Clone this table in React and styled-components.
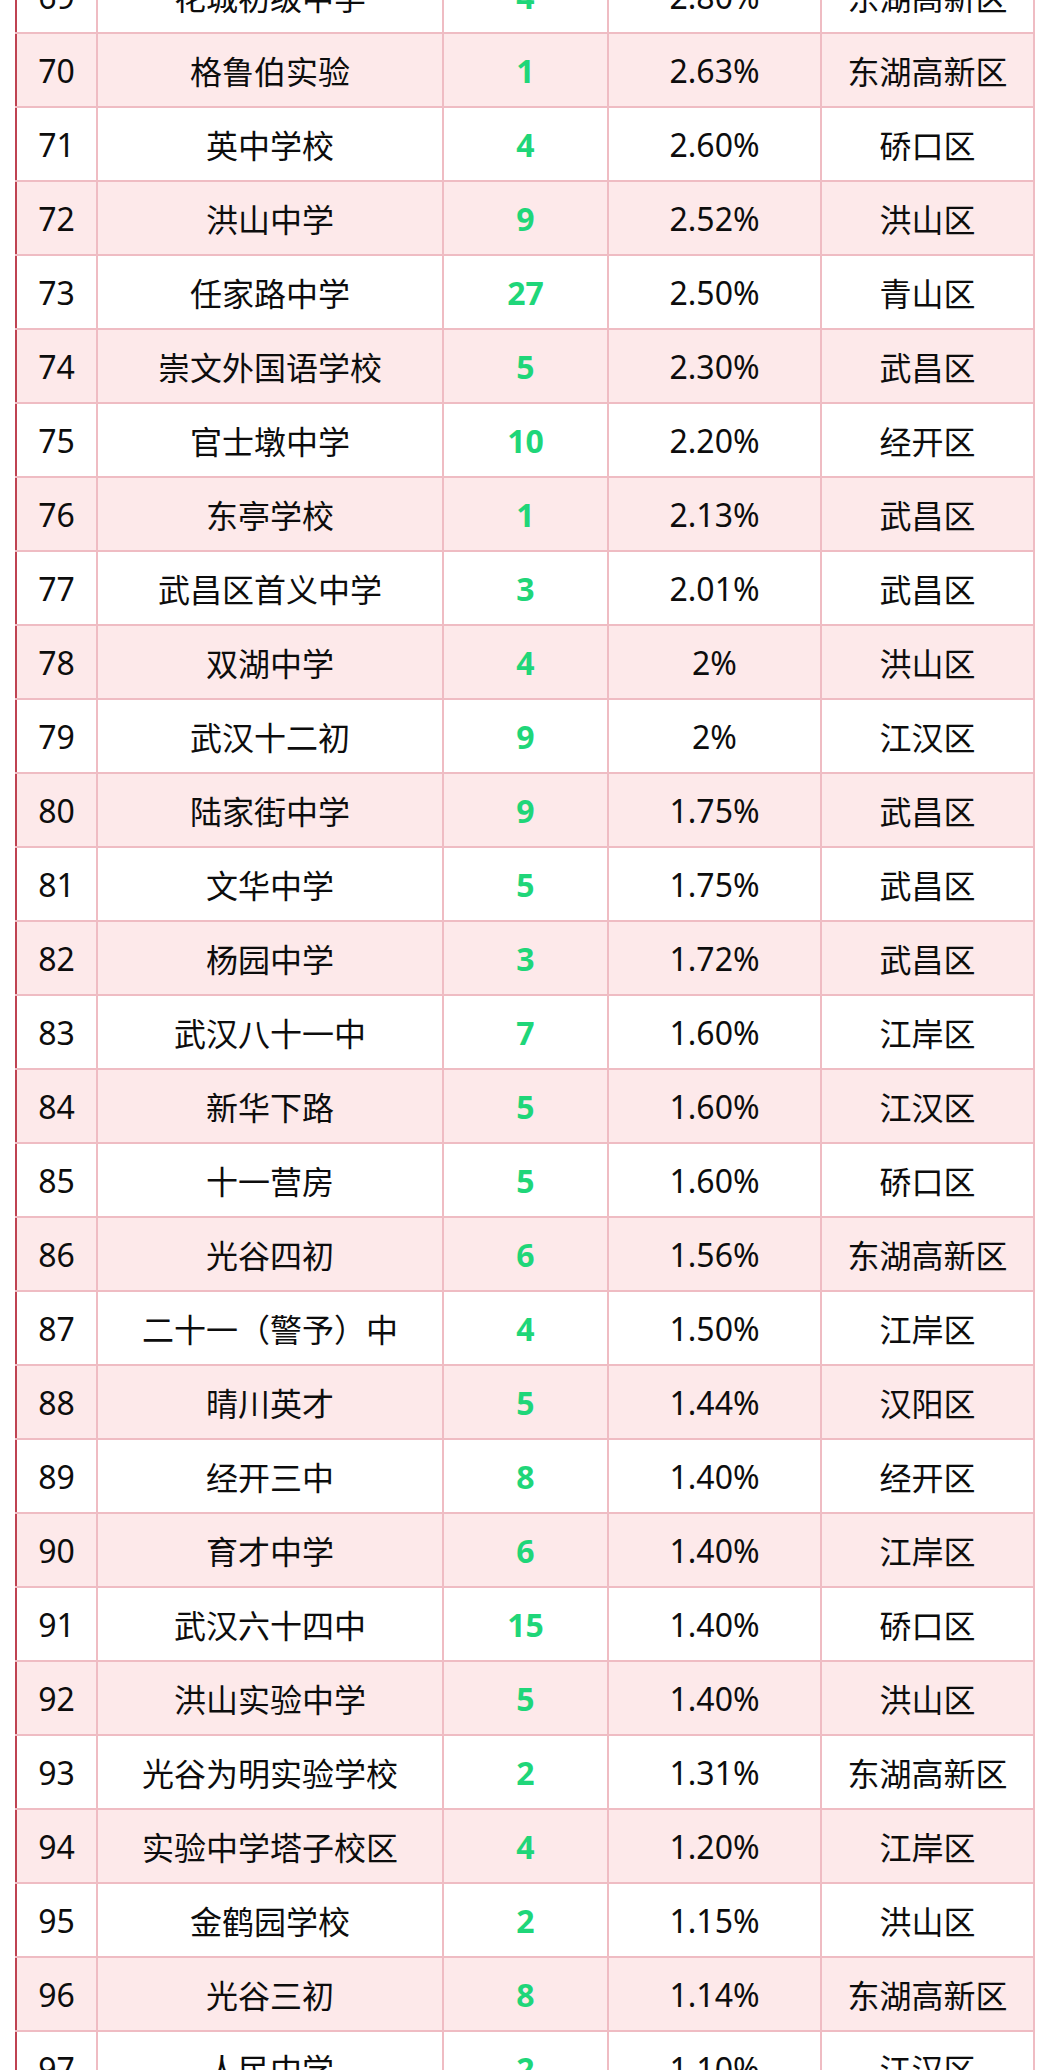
import styled, { createGlobalStyle } from 'styled-components';

const rows = [
  [69, '花城初级中学', 4, '2.80%', '东湖高新区'],
  [70, '格鲁伯实验', 1, '2.63%', '东湖高新区'],
  [71, '英中学校', 4, '2.60%', '硚口区'],
  [72, '洪山中学', 9, '2.52%', '洪山区'],
  [73, '任家路中学', 27, '2.50%', '青山区'],
  [74, '崇文外国语学校', 5, '2.30%', '武昌区'],
  [75, '官士墩中学', 10, '2.20%', '经开区'],
  [76, '东亭学校', 1, '2.13%', '武昌区'],
  [77, '武昌区首义中学', 3, '2.01%', '武昌区'],
  [78, '双湖中学', 4, '2%', '洪山区'],
  [79, '武汉十二初', 9, '2%', '江汉区'],
  [80, '陆家街中学', 9, '1.75%', '武昌区'],
  [81, '文华中学', 5, '1.75%', '武昌区'],
  [82, '杨园中学', 3, '1.72%', '武昌区'],
  [83, '武汉八十一中', 7, '1.60%', '江岸区'],
  [84, '新华下路', 5, '1.60%', '江汉区'],
  [85, '十一营房', 5, '1.60%', '硚口区'],
  [86, '光谷四初', 6, '1.56%', '东湖高新区'],
  [87, '二十一（警予）中', 4, '1.50%', '江岸区'],
  [88, '晴川英才', 5, '1.44%', '汉阳区'],
  [89, '经开三中', 8, '1.40%', '经开区'],
  [90, '育才中学', 6, '1.40%', '江岸区'],
  [91, '武汉六十四中', 15, '1.40%', '硚口区'],
  [92, '洪山实验中学', 5, '1.40%', '洪山区'],
  [93, '光谷为明实验学校', 2, '1.31%', '东湖高新区'],
  [94, '实验中学塔子校区', 4, '1.20%', '江岸区'],
  [95, '金鹤园学校', 2, '1.15%', '洪山区'],
  [96, '光谷三初', 8, '1.14%', '东湖高新区'],
  [97, '人民中学', 2, '1.10%', '江汉区'],
];

const widths = [81, 346, 165, 213, 213];

const GlobalStyle = createGlobalStyle`
  body {
    margin: 0;
    background: #fff;
    font-family: "Noto Sans", "Noto Sans CJK SC", sans-serif;
  }
`;

const Page = styled.div`
  width: 1050px;
  height: 2070px;
  overflow: hidden;
  background: #fff;
`;

const Table = styled.table`
  margin: -42px 0 0 15px;
  width: 1018px;
  table-layout: fixed;
  border-collapse: collapse;
  border-left: 2px solid #bf4352;
`;

const Row = styled.tr`
  height: 74px;
  background: ${p => (p.$alt ? '#fde9ea' : '#fff')};
`;

const Cell = styled.td`
  padding: 0;
  border: 2px solid #efbcc3;
  text-align: center;
  vertical-align: middle;
  font-size: 32px;
  color: #0d0d0d;
  white-space: nowrap;
  &:first-child {
    border-left: 2px solid #bf4352;
  }
`;

const Count = styled(Cell)`
  color: #1fd679;
  font-weight: 700;
  font-size: 32px;
`;

export default function App() {
  return (
    <Page>
      <GlobalStyle />
      <Table>
        <colgroup>
          {widths.map((w, i) => <col key={i} style={{ width: w }} />)}
        </colgroup>
        <tbody>
          {rows.map(([rank, name, n, pct, area]) => (
            <Row key={rank} $alt={rank % 2 === 0}>
              <Cell>{rank}</Cell>
              <Cell>{name}</Cell>
              <Count>{n}</Count>
              <Cell>{pct}</Cell>
              <Cell>{area}</Cell>
            </Row>
          ))}
        </tbody>
      </Table>
    </Page>
  );
}
